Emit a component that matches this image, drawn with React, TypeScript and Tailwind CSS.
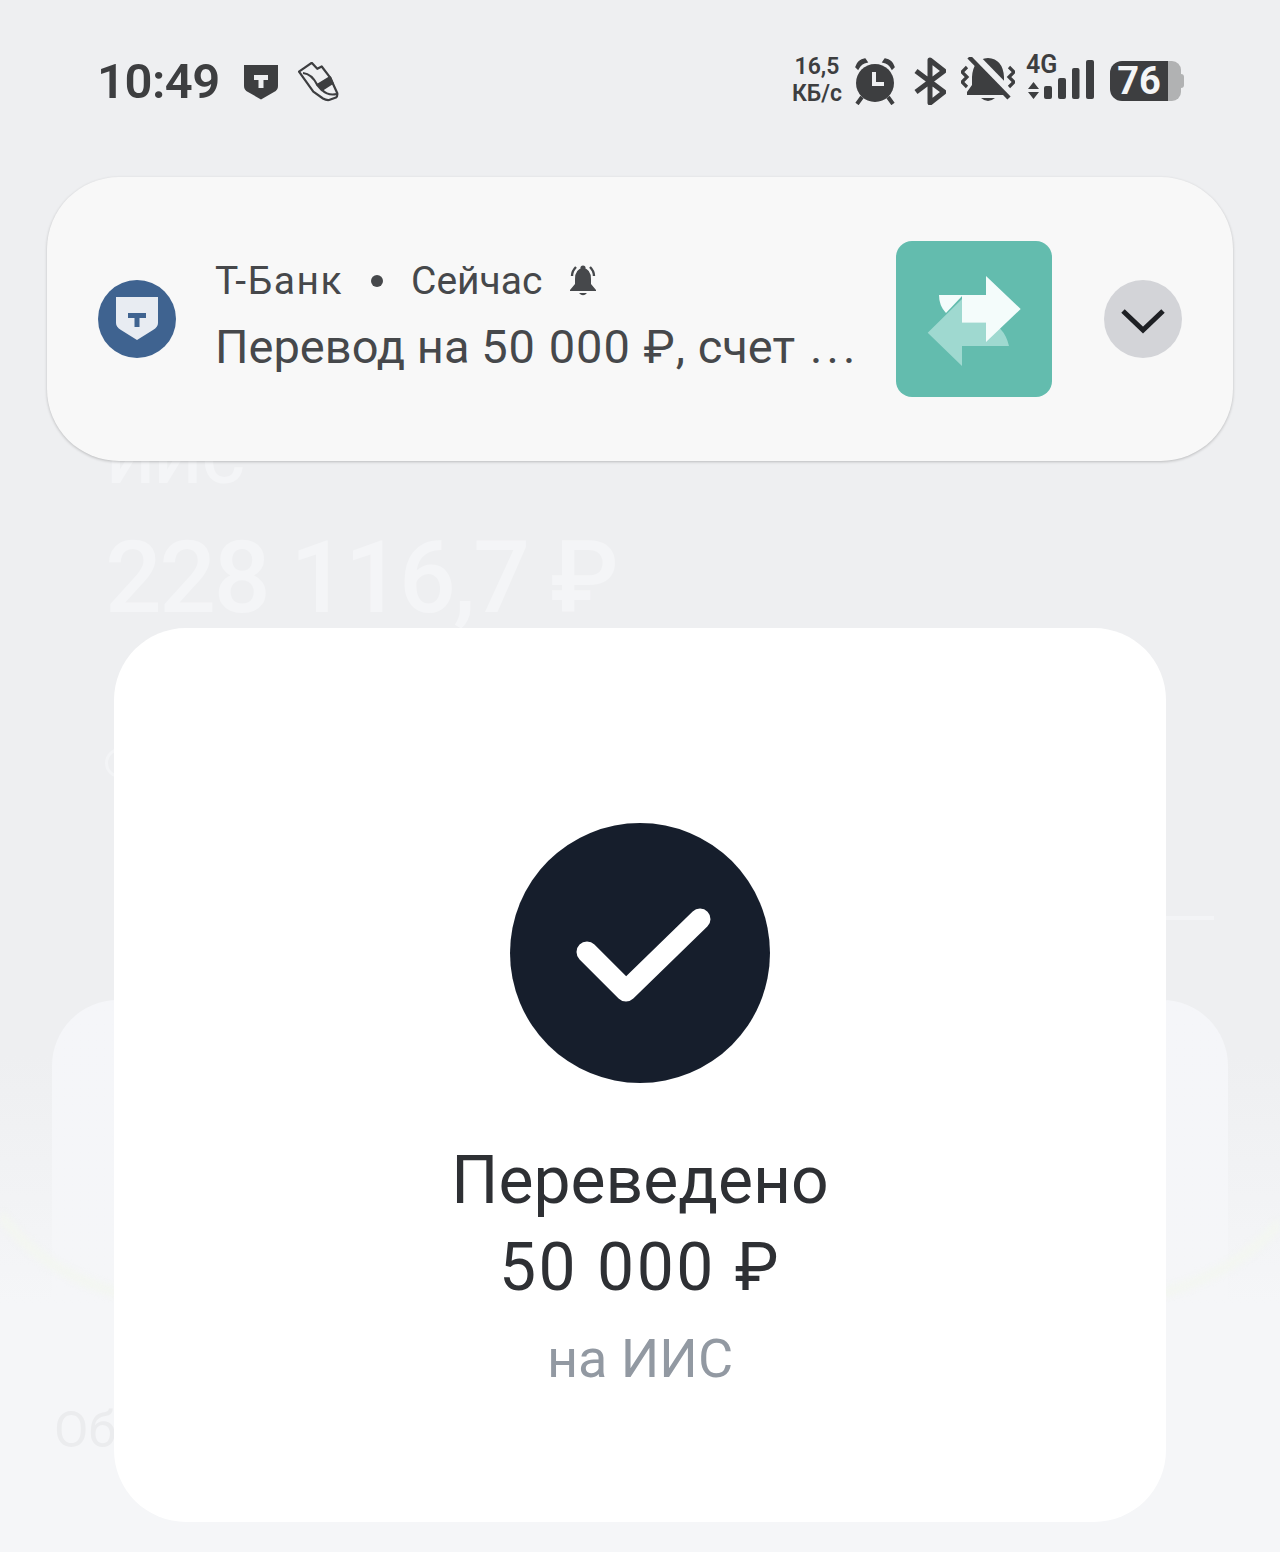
const SANS = "font-['Roboto','Noto_Sans',sans-serif]";

function ShieldIcon() {
  return (
    <svg width="34" height="36" viewBox="0 0 34 36">
      <path d="M0 1H34V22Q34 26 30 28L17 35.5L4 28Q0 26 0 22Z" fill="#3d3e40" />
      <path d="M10 11H24V16H19.5V24H14.5V16H10Z" fill="#eeeff1" />
    </svg>
  );
}

function ShoeIcon() {
  return (
    <svg width="42" height="40" viewBox="0 0 42 40" fill="none" stroke="#3d3e40" strokeWidth="2.2" strokeLinejoin="round">
      <path d="M1 9.7L13.7 0.8L19.3 6.8L23.7 4.5L32 15.3L39.3 31.3Q39.6 34.5 38 35.5L31 38Q28 38.3 25 36.5L15.3 29.7Z" />
      <path d="M19.3 23L32 15.3L34.5 21L23.7 28Z" fill="#3d3e40" />
      <path d="M5 11Q14 12 19.3 23" />
      <path d="M24 28Q30 34 39 32" />
    </svg>
  );
}

function AlarmIcon() {
  return (
    <svg width="42" height="48" viewBox="0 0 42 48">
      <circle cx="21" cy="26" r="19" fill="#3d3e40" />
      <path d="M20 15V27H30" fill="none" stroke="#eeeff1" strokeWidth="4" />
      <path d="M2 10Q4 3 11 2L13 5Q7 6 4 12Z M40 10Q38 3 31 2L29 5Q35 6 38 12Z" fill="#3d3e40" stroke="#3d3e40" strokeWidth="1.5" />
      <path d="M8 40L3 47M34 40L39 47" stroke="#3d3e40" strokeWidth="4" />
    </svg>
  );
}

function BluetoothIcon() {
  return (
    <svg width="32" height="48" viewBox="0 0 32 48" fill="none" stroke="#3d3e40" strokeWidth="5" strokeLinejoin="round">
      <path d="M2 14L30 35L16 46V3L30 14L2 35" />
    </svg>
  );
}

function MutedBellIcon() {
  return (
    <svg width="54" height="48" viewBox="0 0 54 48" fill="none">
      <path d="M27 1Q12 2 11 20V28L6 35V38H48V35L43 28V20Q42 2 27 1Z" fill="#3d3e40" />
      <path d="M20 41Q27 47 34 41Z" fill="#3d3e40" />
      <path d="M12 -3L52 38" stroke="#eeeff1" strokeWidth="7" />
      <path d="M8 0L48 41" stroke="#3d3e40" strokeWidth="4.5" />
      <path d="M6 10L1 15L6 20L1 25L6 30M48 10L53 15L48 20L53 25L48 30" stroke="#3d3e40" strokeWidth="3.2" />
    </svg>
  );
}

function SignalIcon() {
  return (
    <svg width="68" height="44" viewBox="0 0 68 44" fill="#3d3e40">
      <path d="M2 30L7.5 23L13 30Z M2 33L7.5 40L13 33Z" />
      <rect x="18" y="27" width="8" height="13" rx="2" />
      <rect x="32" y="19" width="8" height="21" rx="2" />
      <rect x="46" y="9" width="7.5" height="31" rx="2" />
      <rect x="60" y="1" width="8" height="39" rx="2" />
    </svg>
  );
}

function SmallBellIcon() {
  return (
    <svg width="34" height="34" viewBox="0 0 34 34" fill="none">
      <path d="M17 4Q9 5 9 15V20L4 26V27H30V26L25 20V15Q25 5 17 4Z" fill="#46484b" />
      <circle cx="17" cy="4" r="2.6" fill="#46484b" />
      <path d="M13 29Q17 33.5 21 29Z" fill="#46484b" />
      <path d="M6 12Q6 7 10 3M28 12Q28 7 24 3" stroke="#46484b" strokeWidth="2.4" />
    </svg>
  );
}

function AppBadge() {
  return (
    <div className="w-[78px] h-[78px] rounded-full bg-[#3f6390] flex items-center justify-center shrink-0">
      <svg width="42" height="44" viewBox="0 0 42 44">
        <path d="M0 0H42V26Q42 30 37 33L21 43L5 33Q0 30 0 26Z" fill="#e8ecf2" />
        <path d="M12 16H30V21H23.5V30H18.5V21H12Z" fill="#3f6390" />
      </svg>
    </div>
  );
}

function TransferTile() {
  return (
    <div className="w-[156px] h-[156px] rounded-[16px] bg-[#63bcae] shrink-0 flex items-center justify-center">
      <svg width="156" height="156" viewBox="0 0 156 156">
        <path d="M43 54H67L50 72Q43 65 43 54Z" fill="#f4fcfb" />
        <path d="M31.7 91.7L66 58V81.7H90V80Q108 84 113 105H66V125Z" fill="#9fd9d0" />
        <path d="M66 54H90V35L124.7 68L90 101V81.7H66Z" fill="#f4fcfb" />
      </svg>
    </div>
  );
}

function Chevron() {
  return (
    <div className="w-[78px] h-[78px] rounded-full bg-[#d3d4d8] flex items-center justify-center shrink-0">
      <svg className="mt-[2px]" width="44" height="28" viewBox="0 0 44 28" fill="none" stroke="#1e2024" strokeWidth="5">
        <path d="M2 5L22 24L42 5" />
      </svg>
    </div>
  );
}

function StatusBar() {
  return (
    <div className="h-[160px] pt-[50px] pl-[97px] pr-[96px] flex items-start justify-between text-[#3d3e40]">
      <div className="flex items-center h-[62px]">
        <span className="text-[49px] leading-none font-semibold tracking-[-0.5px]">10:49</span>
        <span className="ml-[24px] mt-[2px]"><ShieldIcon /></span>
        <span className="ml-[20px] mt-[2px]"><ShoeIcon /></span>
      </div>
      <div className="flex items-center h-[62px]">
        <div className="-mt-[3px] text-[23px] leading-[27px] font-semibold text-center">
          <div>16,5</div>
          <div>КБ/с</div>
        </div>
        <span className="ml-[12px]"><AlarmIcon /></span>
        <span className="ml-[18px]"><BluetoothIcon /></span>
        <span className="ml-[15px]"><MutedBellIcon /></span>
        <div className="relative ml-[11px] w-[68px] h-[44px]">
          <SignalIcon />
          <span className="absolute left-0 top-[-7px] text-[25px] leading-none font-semibold">4G</span>
        </div>
        <div className="ml-[16px] flex items-center">
          <div className="w-[58px] h-[40px] rounded-l-[12px] bg-[#3d3e40] text-[#f4f5f6] text-[38px] leading-[40px] font-bold text-center">76</div>
          <div className="w-[13px] h-[40px] rounded-r-[9px] bg-[#b1b2b3]" />
          <div className="w-[3px] h-[14px] rounded-r-[3px] bg-[#b1b2b3]" />
        </div>
      </div>
    </div>
  );
}

// faded account page that shows through behind the overlays
function GhostPage() {
  return (
    <div className="relative text-[#f4f5f7]">
      <div className="pl-[107px] pt-[268px] text-[67px] leading-[64px] font-medium">ИИС</div>
      <div className="pl-[105px] mt-[36px] text-[100px] leading-[100px] font-medium tracking-[-2.5px]">228 116,7 ₽</div>
      <div className="ml-[105px] mt-[120px] w-[30px] h-[30px] rounded-full border-[3px] border-[#f3f4f6]" />
      <div className="ml-auto mr-[66px] mt-[138px] w-[100px] h-[4px] bg-[#f3f4f6]" />
      <div className="mx-[52px] mt-[80px] h-[300px] rounded-t-[66px] bg-gradient-to-b from-[#f5f6f9] to-[#f5f6f8]" />
      <div className="pl-[54px] mt-[100px] text-[50px] leading-[60px] text-[#ebecee]">Обзор</div>
    </div>
  );
}

function GlowArc() {
  return (
    <svg className="absolute left-0 top-[1180px] blur-[3px]" width="1280" height="130" viewBox="0 0 1280 130" fill="none" stroke="#f3f6f1" strokeWidth="10">
      <path d="M0 34Q40 90 115 112H1166Q1240 90 1280 42" />
    </svg>
  );
}

function NotificationCard() {
  return (
    <div className="absolute left-[47px] top-[177px] w-[1186px] h-[284px] rounded-[72px] bg-[#f8f8f8] shadow-[0_1px_3px_rgba(0,0,0,0.22)] pl-[51px] pr-[51px] flex items-center">
      <AppBadge />
      <div className="ml-[39px] -mt-[7px] w-[643px] text-[#46484b]">
        <div className="flex items-center text-[39px] leading-[46px]">
          <span className="tracking-[1.5px]">Т-Банк</span>
          <span className="ml-[28px] w-[12px] h-[12px] rounded-full bg-[#46484b]" />
          <span className="ml-[28px]">Сейчас</span>
          <span className="ml-[24px]"><SmallBellIcon /></span>
        </div>
        <div className="mt-[16px] text-[47px] leading-[54px] whitespace-nowrap">
          Перевод на <span className="tracking-[1px]">50 000 ₽,</span> счет<span className="ml-[15px] tracking-[4px]">...</span>
        </div>
      </div>
      <div className="ml-[38px]"><TransferTile /></div>
      <div className="ml-[52px]"><Chevron /></div>
    </div>
  );
}

function SuccessCard() {
  return (
    <div className="absolute left-[114px] top-[628px] w-[1052px] h-[894px] rounded-[72px] bg-white flex flex-col items-center pt-[195px]">
      <div className="w-[260px] h-[260px] rounded-full bg-[#161e2c] flex items-center justify-center">
        <svg width="260" height="260" viewBox="0 0 260 260" fill="none" stroke="#fff" strokeWidth="21" strokeLinecap="round" strokeLinejoin="round">
          <path d="M77 129L116 168L190 96" />
        </svg>
      </div>
      <div className="mt-[54px] text-[66px] leading-[87px] text-[#2e3034] text-center">
        <div>Переведено</div>
        <div className="tracking-[2.5px]">50 000 ₽</div>
      </div>
      <div className="mt-[15px] text-[54px] leading-[66px] text-[#9299a2]">на ИИС</div>
    </div>
  );
}

export default function App() {
  return (
    <div className={`relative w-[1280px] h-[1552px] overflow-hidden bg-[linear-gradient(180deg,#eeeff1_68%,#f5f6f8_84%)] ${SANS}`}>
      <StatusBar />
      <GhostPage />
      <GlowArc />
      <NotificationCard />
      <SuccessCard />
    </div>
  );
}
